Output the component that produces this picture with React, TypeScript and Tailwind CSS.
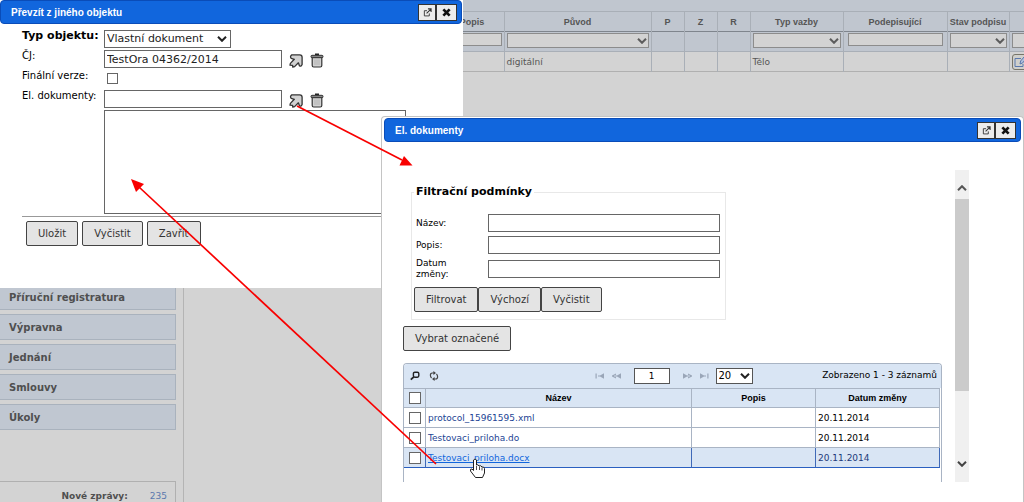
import { useState, type ReactNode } from "react";
import clsx from "clsx";

const MENU = ["Příruční registratura", "Výpravna", "Jednání", "Smlouvy", "Úkoly"];

const FILES = [
  { name: "protocol_15961595.xml", date: "20.11.2014" },
  { name: "Testovaci_priloha.do", date: "20.11.2014" },
  { name: "Testovaci_priloha.docx", date: "20.11.2014", active: true },
];

/* ---------- icons ---------- */

function Chevron({ className }: { className?: string }) {
  return (
    <svg viewBox="0 0 10 6" className={clsx("h-[6px] w-[10px] fill-none stroke-2", className)}>
      <path d="M1 0.8 L5 4.8 L9 0.8" />
    </svg>
  );
}

function PickIcon() {
  return (
    <svg viewBox="0 0 14 14" className="size-[14px]">
      <path
        d="M2.8 0.9 H10.8 Q13.1 0.9 13.1 3.2 V10.6 Q12 13 10.4 11.8 L9.4 8.8 L5.6 12.6 L3.8 13.2 L3.6 11.4 L1 11.2 L1.4 9.4 L5.3 5.3 L2.2 4.4 Q0.6 2.4 2.8 0.9 Z"
        fill="#d2d2d2"
        stroke="#333"
        strokeWidth="1.3"
        strokeLinejoin="round"
      />
    </svg>
  );
}

function TrashIcon() {
  return (
    <svg viewBox="0 0 14 15" className="h-[15px] w-[14px]">
      <path d="M5 1.5 H9" stroke="#222" strokeWidth="2" />
      <path d="M2.2 4.5 H11.8 V12.5 Q11.8 14 10.3 14 H3.7 Q2.2 14 2.2 12.5 Z" fill="#d2d2d2" stroke="#333" strokeWidth="1.2" />
      <rect x="1" y="2.3" width="12" height="2.4" rx="1" fill="#888" stroke="#333" />
      <path d="M5 6.5 V12 M7 6.5 V12 M9 6.5 V12" stroke="#aaa" strokeWidth="0.8" />
    </svg>
  );
}

function PopOutIcon() {
  return (
    <svg viewBox="0 0 10 10" className="size-[9px] fill-none stroke-[#333]">
      <path d="M4.5 3 H1.5 V8.8 H7 V6" />
      <path d="M4 6 L8.5 1.5 M5.5 1 H9 V4.5" strokeWidth="1.2" />
    </svg>
  );
}

function CloseIcon() {
  return (
    <svg viewBox="0 0 10 10" className="size-[9px] stroke-[#111]">
      <path d="M1.5 1.5 L8.5 8.5 M8.5 1.5 L1.5 8.5" strokeWidth="3" />
    </svg>
  );
}

function SearchIcon() {
  return (
    <svg viewBox="0 0 10 10" className="size-[10px] fill-none stroke-[#222]">
      <rect x="3.4" y="1.2" width="5.4" height="5" rx="1.4" strokeWidth="1.4" />
      <path d="M3.8 5.8 L0.8 8.6" strokeWidth="1.8" />
    </svg>
  );
}

function RefreshIcon() {
  return (
    <svg viewBox="0 0 10 10" className="size-[10px] fill-none stroke-[#444]">
      <path d="M5.4 2 H3.2 Q1.4 2 1.4 4.2 Q1.4 6 2.6 7" strokeWidth="1.2" />
      <path d="M4.6 8 H6.8 Q8.600 8 8.6 5.800 Q8.600 4 7.4 3" strokeWidth="1.2" />
      <path d="M4.400 0 L7 2 L4.400 4 Z M5.600 6 L3 8 L5.600 10 Z" className="fill-[#444] stroke-none" />
    </svg>
  );
}

function PagerIcon({ kind }: { kind: "edge" | "step" }) {
  return (
    <svg viewBox="0 0 10 6" className="h-[6px] w-[10px] fill-[#9aa6b8]">
      {kind === "edge" ? <path d="M0.5 0.5 H1.7 V5.5 H0.5 Z" /> : <path d="M4 0.5 V1.7 L1.8 3 L4 4.3 V5.5 L0 3.4 V2.6 Z" />}
      <path d="M9 0.3 V5.7 L5 3.4 H3 V2.6 H5 Z" />
    </svg>
  );
}

function EditIcon() {
  return (
    <svg viewBox="0 0 14 12" className="h-[12px] w-[14px] shrink-0 fill-none stroke-[#5b78ad]">
      <path d="M7 2.5 H1 V10.5 H9 V8" />
      <path d="M6 8 L6.6 5 L10 1 L12 2.5 L8.6 7 Z" fill="#aebfdc" />
    </svg>
  );
}

/* ---------- controls ---------- */

function Button({ children }: { children: ReactNode }) {
  return (
    <button
      type="button"
      className="h-[25px] rounded-xs border border-[#444] bg-[#e4e4e4] px-[11px] text-[10px] leading-4 text-[#333]"
    >
      {children}
    </button>
  );
}

function TextBox({ id, value, label, className }: { id?: string; value?: string; label?: string; className?: string }) {
  return (
    <input
      id={id}
      type="text"
      aria-label={label}
      defaultValue={value}
      className={clsx("h-[18px] border border-[#666] bg-white px-[2px] text-[11px] text-[#222] outline-none", className)}
    />
  );
}

function CheckBox({ id, label, className }: { id?: string; label?: string; className?: string }) {
  return (
    <input
      id={id}
      type="checkbox"
      aria-label={label}
      className={clsx("block appearance-none border border-[#666] bg-white checked:bg-[#1166dd]", className)}
    />
  );
}

function DimSelect({ label }: { label: string }) {
  return (
    <div className="relative">
      <select aria-label={label} className="block h-[15px] w-full appearance-none border border-[#8c8c8c] bg-[#d3d3d3]">
        <option></option>
      </select>
      <Chevron className="pointer-events-none absolute top-[5px] right-[2px] stroke-[#5c5c5c]" />
    </div>
  );
}

function DimInput({ label }: { label: string }) {
  return (
    <input
      type="text"
      aria-label={label}
      className="block h-[13px] w-full border border-[#8c8c8c] bg-[#d3d3d3]"
    />
  );
}

function TitleBar({ title }: { title: string }) {
  return (
    <header className="flex h-[24px] items-center rounded-[4px] border border-[#0a4cb8] bg-[#1166dd] pr-[4px] pl-[10px]">
      <h2 className="flex-1 font-['Liberation_Sans',sans-serif] text-[10px] font-bold text-white">{title}</h2>
      <button
        type="button"
        aria-label="Otevřít v novém okně"
        className="flex h-[17px] w-[18px] items-center justify-center border border-[#333] bg-[#ececec]"
      >
        <PopOutIcon />
      </button>
      <button
        type="button"
        aria-label="Zavřít okno"
        className="flex h-[17px] w-[21px] items-center justify-center border border-[#333] bg-[#ececec]"
      >
        <CloseIcon />
      </button>
    </header>
  );
}

/* ---------- page behind the dialogs ---------- */

function Sidebar() {
  return (
    <aside className="flex w-[184px] shrink-0 flex-col border-r border-[#b4b4b4] pt-[284px] pr-[7px]">
      <nav className="flex flex-col gap-[4px]">
        {MENU.map((item) => (
          <a
            key={item}
            href="#"
            className="flex h-[26px] items-center border border-l-0 border-[#a9b2bd] bg-[#c0c7d1] pl-[9px] text-[10px] font-bold text-[#4f4f4f]"
          >
            {item}
          </a>
        ))}
      </nav>
      <div className="mt-[51px] flex flex-1 justify-end gap-[22px] border-t border-r border-[#b0b0b0] pt-[8px] pr-[8px] text-[9px] leading-3">
        <b className="text-[#4f4f4f]">Nové zprávy:</b>
        <a href="#" className="text-[#5b78ad]">
          235
        </a>
      </div>
    </aside>
  );
}

function SignatureTable() {
  const th = "border-r border-[#a9afb7] text-center font-bold";
  const td = "border-r border-[#a9afb7] px-[2px]";
  const filter = "border-r border-[#a9afb7] px-[2px] pt-px align-top";
  return (
    <main className="min-w-0 flex-1 overflow-hidden">
      <div className="h-[11px] bg-[#c0c6cf]" />
      <table className="w-[885px] table-fixed border-collapse text-[9px] leading-3 text-[#555]">
        <colgroup>
          <col className="w-[256px]" />
          <col className="w-[64px]" />
          <col className="w-[147px]" />
          <col className="w-[33px]" />
          <col className="w-[33px]" />
          <col className="w-[33px]" />
          <col className="w-[93px]" />
          <col className="w-[104px]" />
          <col className="w-[62px]" />
          <col className="w-[60px]" />
        </colgroup>
        <thead className="bg-[#c0c6cf] font-['Liberation_Sans',sans-serif]">
          <tr className="h-[20px] border-t border-b border-t-[#a9afb7] border-b-[#7f858d]">
            <th className={th}></th>
            <th className={th}>Popis</th>
            <th className={th}>Původ</th>
            <th className={th}>P</th>
            <th className={th}>Z</th>
            <th className={th}>R</th>
            <th className={th}>Typ vazby</th>
            <th className={th}>Podepisující</th>
            <th className={clsx(th, "whitespace-nowrap")}>Stav podpisu</th>
            <th></th>
          </tr>
          <tr className="h-[20px] border-b border-[#a9afb7]">
            <td className={filter}></td>
            <td className={filter}>
              <DimInput label="Popis" />
            </td>
            <td className={filter}>
              <DimSelect label="Původ" />
            </td>
            <td className={filter}></td>
            <td className={filter}></td>
            <td className={filter}></td>
            <td className={filter}>
              <DimSelect label="Typ vazby" />
            </td>
            <td className="border-r border-[#a9afb7] px-[4px] pt-px align-top">
              <DimInput label="Podepisující" />
            </td>
            <td className={filter}>
              <DimSelect label="Stav podpisu" />
            </td>
            <td className="px-[2px] pt-px align-top">
              <DimSelect label="Stav" />
            </td>
          </tr>
        </thead>
        <tbody>
          <tr className="h-[20px] border-b border-[#b0b0b0]">
            <td className={td}></td>
            <td className={td}></td>
            <td className={td}>digitální</td>
            <td className={td}></td>
            <td className={td}></td>
            <td className={td}></td>
            <td className={td}>Tělo</td>
            <td className={td}></td>
            <td className={td}></td>
            <td className="px-[2px]">
              <button
                type="button"
                aria-label="Upravit"
                className="flex h-[16px] w-[20px] items-center rounded-[3px] border border-[#77756a] bg-[#d0d0cc] pl-px"
              >
                <EditIcon />
              </button>
            </td>
          </tr>
        </tbody>
      </table>
    </main>
  );
}

/* ---------- dialogs ---------- */

function FieldRow({ id, label, bold, center, children }: { id: string; label: string; bold?: boolean; center?: boolean; children: ReactNode }) {
  return (
    <div className="flex h-[20px]">
      <label
        htmlFor={id}
        className={clsx("w-[82px] shrink-0 leading-4 whitespace-nowrap", bold ? "text-[11px] font-bold" : "text-[10px]")}
      >
        {label}
      </label>
      <div className={clsx("flex gap-[7px]", center ? "items-center" : "items-end")}>{children}</div>
    </div>
  );
}

function PickButtons() {
  return (
    <>
      <button type="button" aria-label="Vybrat">
        <PickIcon />
      </button>
      <button type="button" aria-label="Smazat">
        <TrashIcon />
      </button>
    </>
  );
}

function TakeOverDialog() {
  return (
    <section className="absolute top-0 left-0 h-[288px] w-[463px] bg-white pr-px text-black">
      <TitleBar title="Převzít z jiného objektu" />
      <form className="pt-[4px] pl-[22px]">
        <FieldRow id="typ" label="Typ objektu:" bold>
          <div className="relative">
            <select
              id="typ"
              className="block h-[18px] w-[127px] appearance-none border border-[#666] bg-white px-[2px] text-[11px] leading-4 text-[#222]"
            >
              <option>Vlastní dokument</option>
            </select>
            <Chevron className="pointer-events-none absolute top-[6px] right-[4px] stroke-[#222]" />
          </div>
        </FieldRow>
        <FieldRow id="cj" label="ČJ:">
          <TextBox id="cj" value="TestOra 04362/2014" className="w-[178px]" />
          <PickButtons />
        </FieldRow>
        <FieldRow id="finalni" label="Finální verze:" center>
          <CheckBox id="finalni" className="ml-[3px] size-[11px]" />
        </FieldRow>
        <FieldRow id="dokumenty" label="El. dokumenty:">
          <TextBox id="dokumenty" className="w-[178px]" />
          <PickButtons />
        </FieldRow>
        <textarea
          aria-label="Seznam el. dokumentů"
          className="mt-[2px] ml-[82px] block h-[104px] w-[302px] resize-none border border-[#666] bg-white outline-none"
        />
        <div className="mt-[2px] flex gap-[4px] border-t border-[#999] pt-[4px] pl-[4px]">
          <Button>Uložit</Button>
          <Button>Vyčistit</Button>
          <Button>Zavřít</Button>
        </div>
      </form>
    </section>
  );
}

function FilterForm() {
  const row = "flex items-center";
  const label = "w-[72px] text-[9px] leading-[11px]";
  return (
    <fieldset className="ml-[8px] w-[315px] border border-[#e8e8e8] pb-[7px] pl-[2px]">
      <legend className="px-[2px] text-[11px] leading-4 font-bold">Filtrační podmínky</legend>
      <div className="flex flex-col gap-[4px] pt-[14px] pl-[2px]">
        <div className={row}>
          <label htmlFor="nazev" className={label}>
            Název:
          </label>
          <TextBox id="nazev" className="w-[232px]" />
        </div>
        <div className={row}>
          <label htmlFor="popis" className={label}>
            Popis:
          </label>
          <TextBox id="popis" className="w-[232px]" />
        </div>
        <div className={row}>
          <label htmlFor="datum" className={label}>
            Datum
            <br />
            změny:
          </label>
          <TextBox id="datum" className="w-[232px]" />
        </div>
      </div>
      <div className="flex pt-[7px]">
        <Button>Filtrovat</Button>
        <Button>Výchozí</Button>
        <Button>Vyčistit</Button>
      </div>
    </fieldset>
  );
}

function GridToolbar() {
  return (
    <div className="flex h-[24px] items-center px-[4px] text-[9px]">
      <div className="flex flex-1 gap-[9px] pl-[2px]">
        <button type="button" aria-label="Hledat">
          <SearchIcon />
        </button>
        <button type="button" aria-label="Obnovit">
          <RefreshIcon />
        </button>
      </div>
      <div className="flex items-center gap-[7px]">
        <button type="button" aria-label="První">
          <PagerIcon kind="edge" />
        </button>
        <button type="button" aria-label="Předchozí">
          <PagerIcon kind="step" />
        </button>
        <input
          type="text"
          aria-label="Stránka"
          defaultValue="1"
          className="mx-[5px] h-[16px] w-[36px] border border-[#555] bg-white text-center outline-none"
        />
        <button type="button" aria-label="Další" className="rotate-180">
          <PagerIcon kind="step" />
        </button>
        <button type="button" aria-label="Poslední" className="rotate-180">
          <PagerIcon kind="edge" />
        </button>
        <div className="relative">
          <select
            aria-label="Počet záznamů"
            className="block h-[16px] w-[37px] appearance-none border border-[#555] bg-white px-[2px] text-[10px] leading-3"
          >
            <option>20</option>
          </select>
          <Chevron className="pointer-events-none absolute top-[5px] right-[3px] stroke-[#222]" />
        </div>
      </div>
      <span className="flex-1 text-right whitespace-nowrap">Zobrazeno 1 - 3 záznamů</span>
    </div>
  );
}

function DocumentGrid() {
  const [rows] = useState(FILES);
  const cell = "border-r border-b border-[#a9b4c4]";
  return (
    <div className="mt-[12px] flex-1 rounded-t-[4px] border border-b-0 border-[#a9b4c4]">
      <div className="rounded-t-[3px] bg-[#d9e5f4]">
        <GridToolbar />
      </div>
      <div className="pr-px">
        <table className="w-full table-fixed border-separate border-spacing-0 text-[9px] leading-3">
          <colgroup>
            <col className="w-[22px]" />
            <col />
            <col className="w-[124px]" />
            <col className="w-[124px]" />
          </colgroup>
          <thead className="bg-[#d9e5f4] font-['Liberation_Sans',sans-serif]">
            <tr className="h-[20px]">
              <th className={clsx(cell, "border-t pl-[5px]")}>
                <CheckBox label="Označit vše" className="size-[12px]" />
              </th>
              <th className={clsx(cell, "border-t")}>Název</th>
              <th className={clsx(cell, "border-t")}>Popis</th>
              <th className={clsx(cell, "border-t")}>Datum změny</th>
            </tr>
          </thead>
          <tbody>
            {rows.map((file) => {
              const td = file.active
                ? "border-r border-b border-r-[#3f69b8] border-b-[#2a5fc0] bg-[#d9e5f4]"
                : cell;
              return (
                <tr key={file.name} className="h-[20px]">
                  <td className={clsx(td, "pl-[5px]")}>
                    <CheckBox label={file.name} className="size-[12px]" />
                  </td>
                  <td className={clsx(td, "pl-[2px]")}>
                    <a href="#" className={clsx(file.active ? "text-[#1166dd] underline" : "text-[#1c4494]")}>
                      {file.name}
                    </a>
                  </td>
                  <td className={td}></td>
                  <td className={clsx(td, "pl-[2px]", file.active && "text-[#1c3a7a]")}>{file.date}</td>
                </tr>
              );
            })}
          </tbody>
        </table>
      </div>
    </div>
  );
}

function ScrollBar() {
  return (
    <div className="flex w-[14px] flex-col items-center bg-[#f0f0f0]">
      <div className="flex h-[29px] items-end pb-[8px]">
        <Chevron className="rotate-180 stroke-[#555]" />
      </div>
      <div className="h-[192px] w-full bg-[#cbcbcb]" />
      <div className="mt-auto pb-[15px]">
        <Chevron className="stroke-[#444]" />
      </div>
    </div>
  );
}

function DocumentsDialog() {
  return (
    <section className="absolute top-[116px] right-0 bottom-0 left-[381px] flex flex-col rounded-t-[4px] border border-b-0 border-[#c4c4c4] bg-white px-[2px] pt-px text-black">
      <TitleBar title="El. dokumenty" />
      <div className="mt-[28px] mb-[20px] flex flex-1 gap-[13px] pr-[52px] pl-[19px]">
        <div className="flex flex-1 flex-col pt-[14px]">
          <FilterForm />
          <div className="flex pt-[6px]">
            <Button>Vybrat označené</Button>
          </div>
          <DocumentGrid />
        </div>
        <ScrollBar />
      </div>
    </section>
  );
}

/* red arrows and the hand pointer that lie over everything */
function Annotations() {
  return (
    <svg viewBox="0 0 1024 502" className="pointer-events-none absolute top-0 left-0 h-[502px] w-[1024px]">
      <g stroke="#f80000" strokeWidth="1.7" fill="#f80000">
        <path d="M297 106 L402 160" />
        <path d="M412.5 165.5 L399.5 165.5 L404 156 Z" stroke="none" />
        <path d="M436 464 L139 187" />
        <path d="M131 179 L144 184 L136 192 Z" stroke="none" />
      </g>
      <path
        d="M473.5 460 Q475 458 476.5 460 V465 Q478 464 479 466 Q481 465 482 467 Q484 466.5 484.5 468.5 V473 L482.5 477.5 H475.5 L470.5 471 Q470 468.5 472 469 L473.5 470.5 Z"
        fill="#fff"
        stroke="#222"
      />
      <path d="M476.5 466 V470 M479.5 466.5 V470 M482 467.5 V470.5" stroke="#222" strokeWidth="0.8" />
    </svg>
  );
}

export default function App() {
  return (
    <div className="relative flex min-h-screen overflow-hidden bg-[#d3d3d3] font-['DejaVu_Sans',sans-serif]">
      <Sidebar />
      <SignatureTable />
      <TakeOverDialog />
      <DocumentsDialog />
      <Annotations />
    </div>
  );
}
